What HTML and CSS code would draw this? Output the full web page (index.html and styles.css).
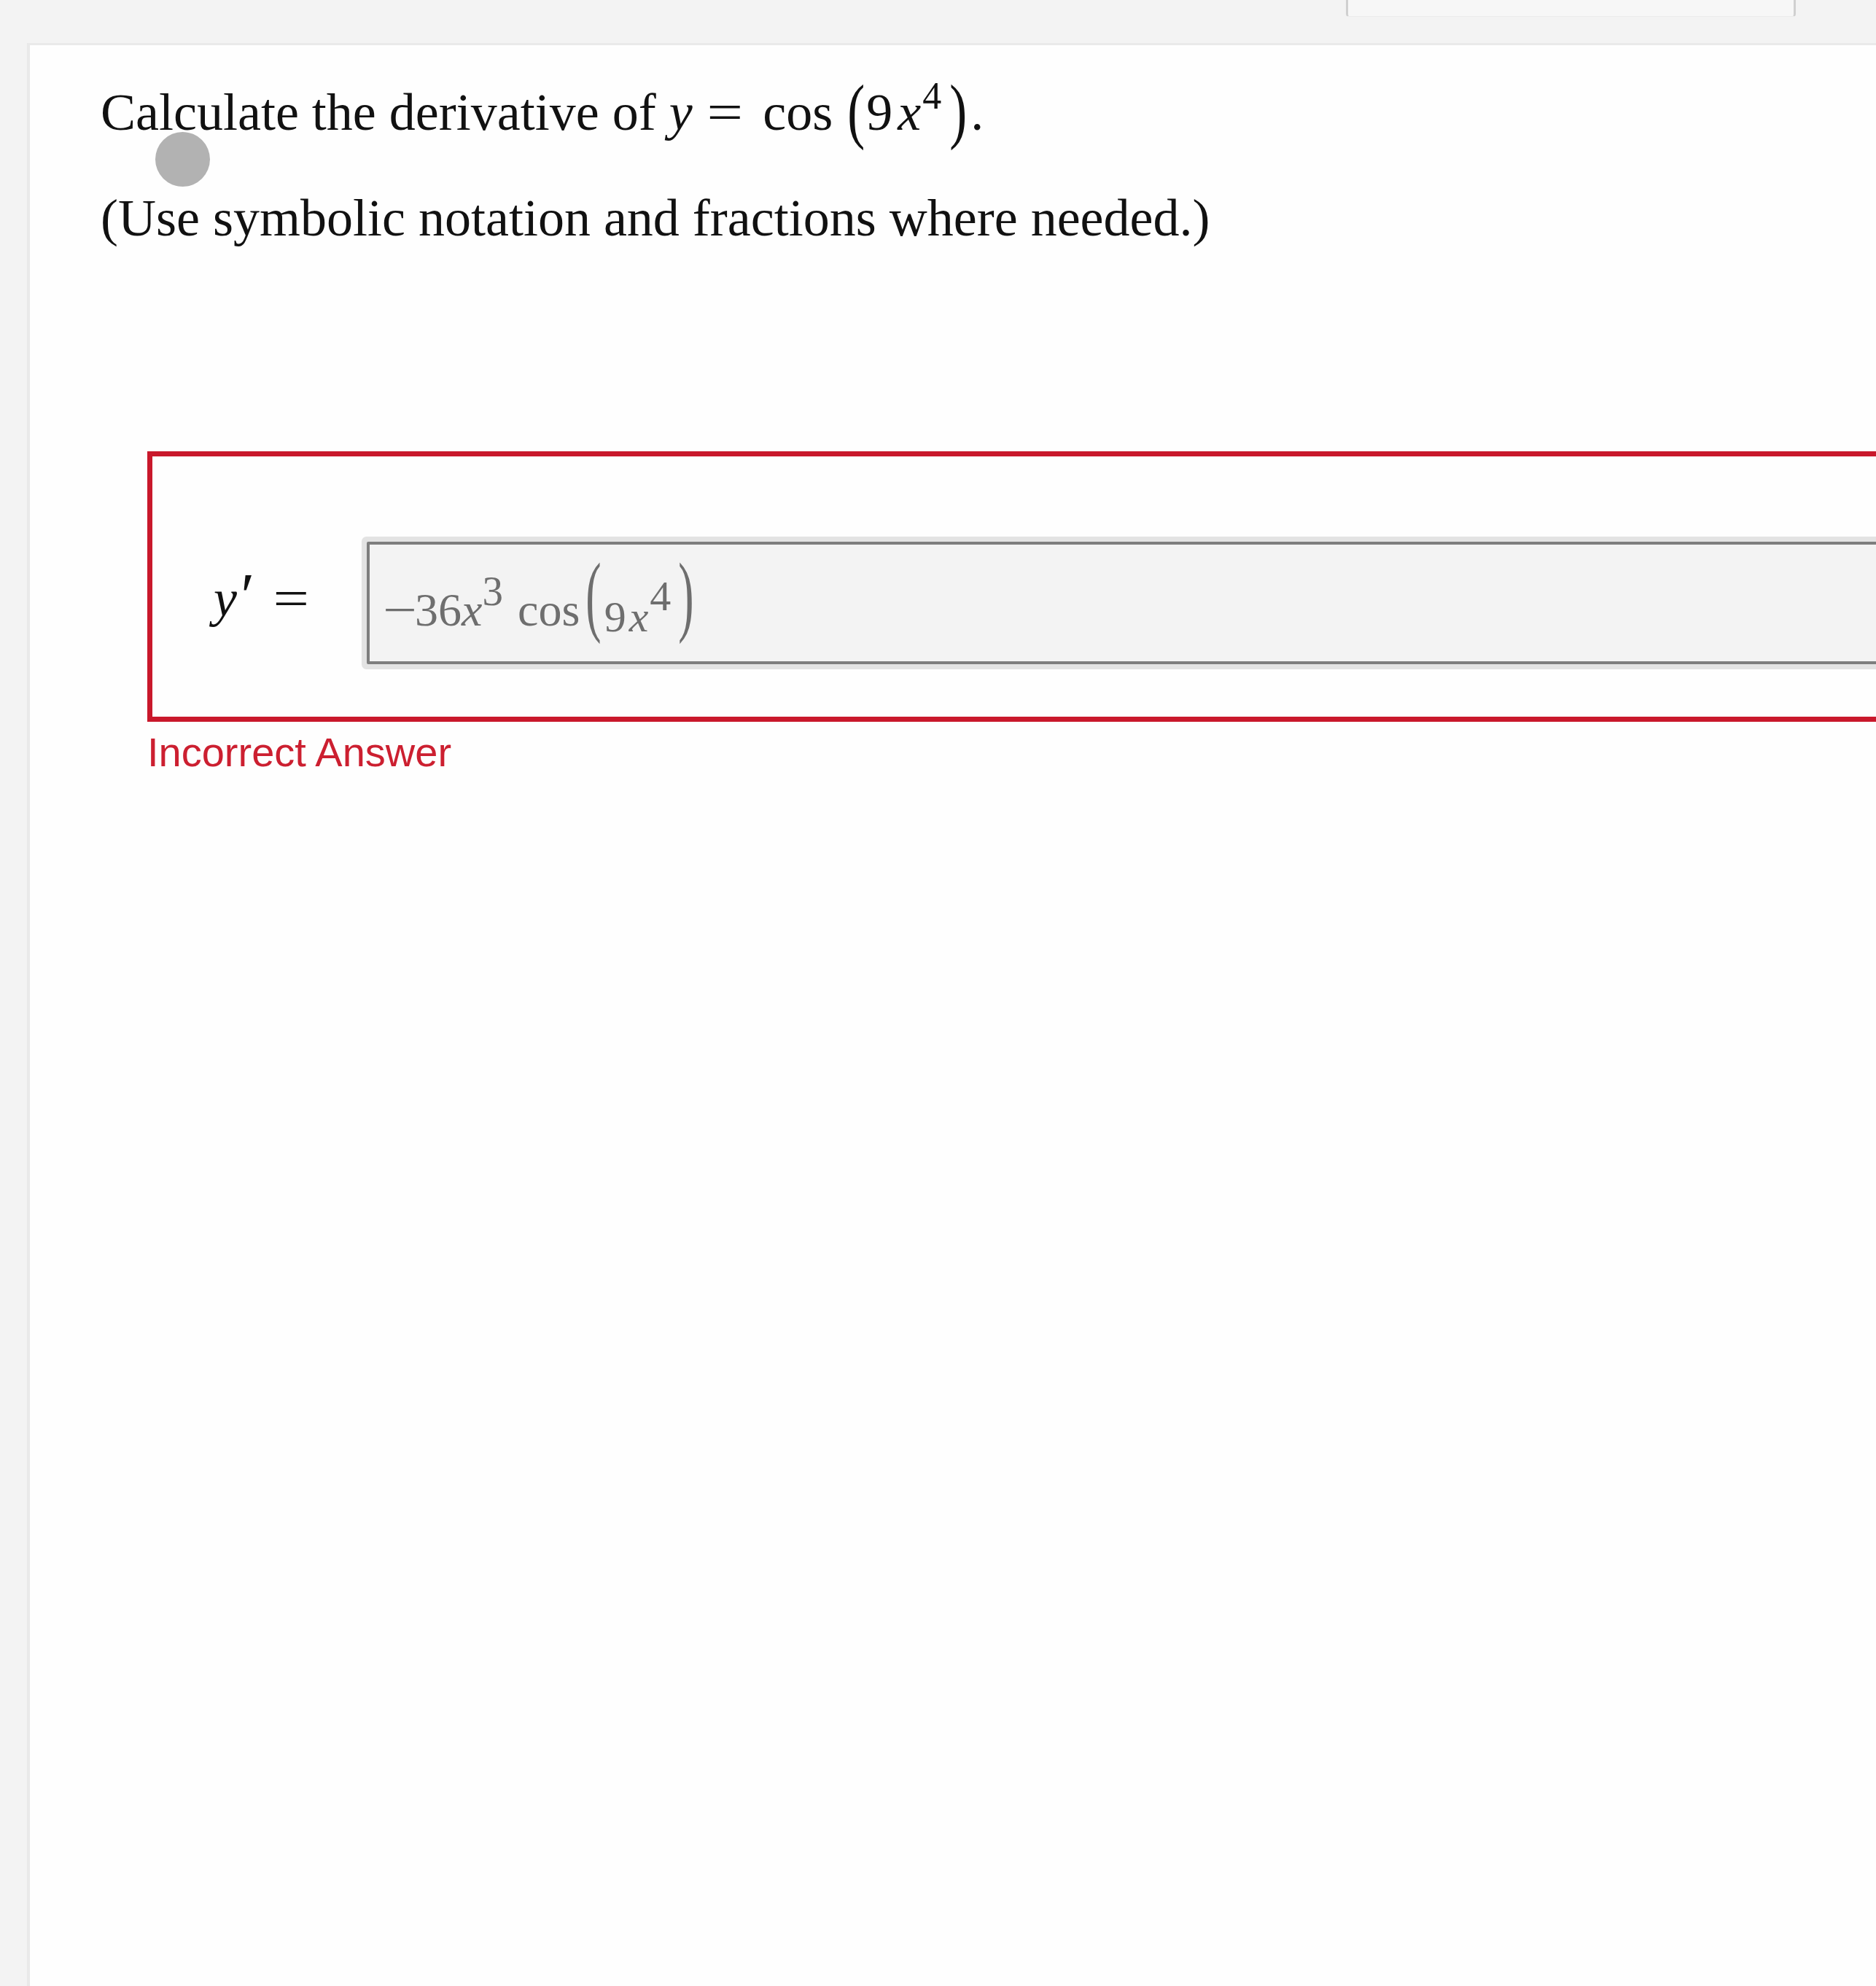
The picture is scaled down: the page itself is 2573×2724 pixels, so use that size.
FILE: index.html
```html
<!DOCTYPE html>
<html lang="en">
<head>
<meta charset="utf-8">
<title>Derivative question</title>
<link rel="stylesheet" href="styles.css">
</head>
<body>
<div class="topbar"><div class="tab"></div></div>
<main class="panel">
  <p class="q">Calculate the derivative of <i class="v">y</i><span class="eq">=</span>cos <span class="pl">(</span>9<i class="v vx">x</i><sup class="s1">4</sup><span class="pl plr">)</span><span class="dot">.</span></p>
  <p class="q q2">(Use symbolic notation and fractions where needed.)</p>
  <div class="answer">
    <div class="lbl"><i class="v">y</i><span class="prime">′</span><span class="eq eq2">=</span></div>
    <div class="field"><span class="mq"><span class="minus">−</span>36<i class="v">x</i><sup class="s2">3</sup><span class="cos">cos</span><span class="bp">(</span><span class="inner"><span class="nine">9</span><i class="v ix">x</i><sup class="s3">4</sup></span><span class="bp bpr">)</span></span></div>
  </div>
  <div class="fb">Incorrect Answer</div>
</main>
<div class="touch"></div>
</body>
</html>
```

FILE: styles.css
```css
html, body {
  margin: 0;
  padding: 0;
  overflow: hidden;
  background: #f3f3f3;
}
body {
  font-family: "Liberation Serif", "Times New Roman", serif;
  color: #111;
}
.topbar {
  height: 59px;
  display: flex;
  justify-content: flex-end;
  padding-right: 110px;
  box-sizing: border-box;
}
.tab {
  width: 617px;
  height: 23px;
  box-sizing: border-box;
  background: #f7f7f7;
  border-left: 3px solid #d0d0d0;
  border-right: 3px solid #d0d0d0;
  border-bottom: 1px solid #ececec;
  border-radius: 0 0 4px 4px;
}
.panel {
  display: block;
  margin-left: 37px;
  background: #fefefe;
  border-left: 4px solid #e9e9e9;
  border-top: 3px solid #eaeaea;
  min-height: calc(100vh - 59px);
  box-sizing: border-box;
  padding: 49px 0 0 97px;
  overflow: hidden;
}
.q {
  margin: 0;
  font-size: 72px;
  line-height: 86px;
  white-space: nowrap;
}
.q2 {
  margin-top: 59px;
}
.v {
  font-style: italic;
}
.eq {
  display: inline-block;
  transform: scaleX(1.22);
  margin: 0 32px 0 24px;
}
.pl {
  display: inline-block;
  line-height: 1;
  transform-origin: 50% 0.579em;
  transform: scaleY(1.38);
  margin: 0 2px;
}
.plr {
  margin-left: 11px;
}
.vx {
  margin-left: 7px;
}
.dot {
  margin-left: 3px;
}
sup {
  line-height: 0;
}
.s1 {
  font-size: 52px;
  vertical-align: 29px;
  margin-left: 2px;
}
.answer {
  margin: 277px 0 0 64px;
  width: 2600px;
  border: 7px solid #c9182b;
  padding: 117px 0 72px 84px;
  display: flex;
  align-items: flex-start;
  box-sizing: border-box;
}
.lbl {
  width: 210px;
  flex: none;
  font-size: 72px;
  line-height: 86px;
  margin-top: 35px;
  white-space: nowrap;
}
.prime {
  display: inline-block;
  font-size: 64px;
  font-style: italic;
  transform-origin: 0 70%;
  transform: scale(1.35);
}
.eq2 {
  margin-left: 40px;
}
.field {
  flex: 1;
  height: 168px;
  box-sizing: border-box;
  border: 4px solid #7e7e7e;
  border-radius: 2px;
  box-shadow: 0 0 0 7px #e3e3e3;
  background: #f3f3f3;
  padding: 19px 0 0 18px;
  font-size: 64px;
  line-height: 141px;
  color: #6e6e6e;
  white-space: nowrap;
}
.minus {
  display: inline-block;
  transform-origin: 0 50%;
  transform: scaleX(1.3);
  margin-right: 8px;
}
.s2 {
  font-size: 57px;
  vertical-align: 28px;
}
.cos {
  margin-left: 20px;
}
.bp {
  display: inline-block;
  line-height: 1;
  transform-origin: 50% 0.579em;
  transform: translateY(-16px) scaleY(1.92);
  margin: 0 2px 0 8px;
}
.bpr {
  margin: 0 0 0 10px;
}
.inner {
  font-size: 60px;
  vertical-align: -8px;
}
.nine {
  margin-left: 2px;
}
.ix {
  margin-left: 4px;
}
.s3 {
  font-size: 58px;
  vertical-align: 29px;
  margin-left: 2px;
}
.fb {
  margin: 10px 0 0 64px;
  font-family: "Liberation Sans", Arial, sans-serif;
  font-size: 56px;
  line-height: 64px;
  color: #cc1f30;
}
.touch {
  position: absolute;
  left: 213px;
  top: 181px;
  width: 75px;
  height: 75px;
  border-radius: 50%;
  background: #b2b2b2;
}
```
